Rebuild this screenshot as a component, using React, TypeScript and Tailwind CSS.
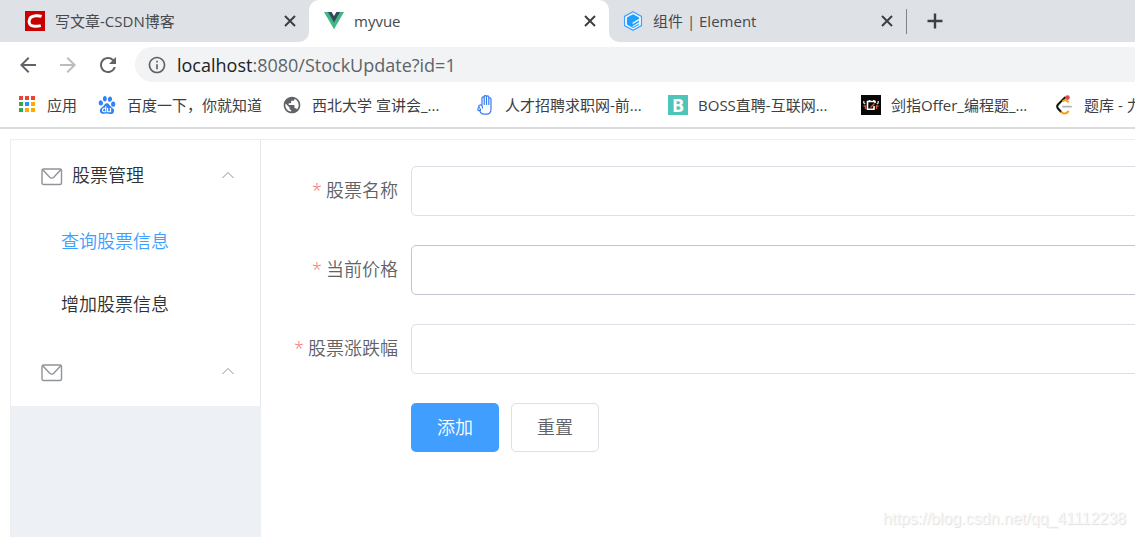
import type { ReactNode } from "react";
import { MdArrowBack, MdArrowForward, MdInfoOutline, MdPublic, MdRefresh } from "react-icons/md";
import { SiBaidu } from "react-icons/si";

function CsdnIcon() {
  return (
    <svg viewBox="0 0 20 20" className="size-5 shrink-0">
      <rect width="20" height="20" fill="#c90000" />
      <path
        d="M16.6 5.4C14.6 4.700 12.600 4.500 10.600 4.700C6.600 5 4.200 7.400 4.100 10.400C4 13.800 6.200 15.200 10 15.200C12 15.200 13.800 15.100 15.800 14.600"
        fill="none"
        stroke="#fff"
        strokeWidth="3"
      />
    </svg>
  );
}

function VueIcon() {
  return (
    <svg viewBox="0 0 20 20" className="size-5 shrink-0">
      <path d="M0 1h20L10 18.300z" fill="#41b883" />
      <path d="M4 1h12l-6 10.400z" fill="#35495e" />
      <path d="M7.600 1h4.800L10 5z" fill="#fff" />
    </svg>
  );
}

function ElementIcon() {
  return (
    <svg viewBox="0 0 20 20" className="size-5 shrink-0">
      <path d="M10 .7l8.5 4.7v9.2L10 19.3l-8.5-4.700V5.400z" fill="#e9f5ff" stroke="#409eff" strokeWidth="1.1" />
      <path d="M10 3.200l6 3.400v1.200l-6.400 3.800v1.600l6.400-3.800v1.800l-6.400 3.700v1.400l6.200-3.600v1.400L10 17.100l-6-3.600v-7z" fill="#1e9fff" />
    </svg>
  );
}

const APP_DOTS = [
  "#ea4335", "#ea4335", "#ea4335",
  "#34a853", "#2196f3", "#fbab00",
  "#34a853", "#fbab00", "#fbab00",
];

function AppsIcon() {
  return (
    <svg viewBox="0 0 20 20" className="size-5">
      {APP_DOTS.map((color, i) => (
        <rect key={i} x={2 + (i % 3) * 6} y={1 + Math.floor(i / 3) * 6} width="4" height="4" fill={color} />
      ))}
    </svg>
  );
}

function HandIcon() {
  return (
    <svg viewBox="0 0 20 20" className="size-5" fill="none" stroke="#3b7bf0" strokeWidth="1.2" strokeLinecap="round" strokeLinejoin="round">
      <path d="M7 9.500V3a1.100 1.100 0 0 1 2.200 0v6.500M9.200 9.500V1.700a1.100 1.100 0 0 1 2.300 0v7.800M11.500 9.500V2a1.100 1.100 0 0 1 2.300 0v7.500M13.800 9.500V4a1.100 1.100 0 0 1 2.200 0v10c0 3-1.600 5.200-4.600 5.200H9.200c-2 0-3.600-1.200-4.200-2.800" />
      <path d="M7.500 13c.3-2-1-3.300-2.500-3s-1.800 1.900-.6 2.400c-1.800.2-2.300 3-.4 3.300 1.600.2 2.200-1.600.8-1.900" />
    </svg>
  );
}

function BossIcon() {
  return (
    <span className="flex size-5 items-center justify-center bg-[#4fc4b9] text-lg/5 font-bold text-white">
      B
    </span>
  );
}

function NowcoderIcon() {
  return (
    <svg viewBox="0 0 20 20" className="size-5" fill="none">
      <rect width="20" height="20" fill="#080808" />
      <path d="M14 8V6.500H6.500v7.700H13V11M8.500 6V5M13 6V5" stroke="#fff" strokeWidth="1.600" />
      <path d="M2.800 6v2l1.400 1M17.200 6v2l-1.400 1" stroke="#ddd" strokeWidth="1.300" />
      <path d="M2.500 11h2v3M17.500 11h-2v3M9.500 12.500l4-4" stroke="#e0512f" strokeWidth="1.400" />
    </svg>
  );
}

function LeetcodeIcon() {
  return (
    <svg viewBox="0 0 20 20" className="size-5" fill="none" strokeWidth="2" strokeLinecap="round">
      <path d="M11 2.500L4 9.500c-1 1.200-1 2.800 0 4l3 3.200" stroke="#111" />
      <path d="M9 6c1.800-1.400 3.800-1 5.200.8M7.500 17.200c2 2 4.600 1.800 6.700-.7" stroke="#f9a01b" />
      <path d="M9 11.700h8" stroke="#b3b3b3" strokeWidth="1.800" />
      <circle cx="13.500" cy="2.600" r="2.300" fill="#e0484a" />
    </svg>
  );
}

function CloseButton({ label }: { label: string }) {
  return (
    <button type="button" aria-label={label} className="ml-auto shrink-0">
      <svg viewBox="0 0 20 20" className="size-5" stroke="#3c4043" strokeWidth="2">
        <path d="M5 5l10 10M15 5L5 15" />
      </svg>
    </button>
  );
}

function Tab({ icon, title }: { icon: ReactNode; title: string }) {
  return (
    <div className="flex h-full items-center gap-[10px] pr-[9px] text-[15px]">
      {icon}
      <span className="whitespace-nowrap">{title}</span>
      <CloseButton label={`关闭 ${title}`} />
    </div>
  );
}

function TabStrip() {
  return (
    <div className="flex h-[42px] bg-white text-[#45494d]">
      <div className="w-[309px] shrink-0 rounded-br-[10px] bg-[#dee1e6] pl-[25px]">
        <Tab icon={<CsdnIcon />} title="写文章-CSDN博客" />
      </div>
      <div className="w-[300px] shrink-0 bg-[linear-gradient(#dee1e6_50%,white_50%)]">
        <div className="h-full rounded-t-[10px] bg-white pl-[15px]">
          <Tab icon={<VueIcon />} title="myvue" />
        </div>
      </div>
      <div className="flex min-w-0 flex-1 items-center rounded-bl-[10px] bg-[#dee1e6]">
        <div className="h-full w-[297px] shrink-0 pl-[14px]">
          <Tab icon={<ElementIcon />} title="组件 | Element" />
        </div>
        <div className="h-[25px] w-px bg-[#808387]" />
        <button type="button" aria-label="新标签页" className="ml-[18px]">
          <svg viewBox="0 0 20 20" className="size-5" stroke="#3c4043" strokeWidth="2.400">
            <path d="M10 2.500v15M2.500 10h15" />
          </svg>
        </button>
      </div>
    </div>
  );
}

function Toolbar() {
  return (
    <div className="flex h-[45px] items-center pl-4 text-[#5f6368]">
      <button type="button" aria-label="后退">
        <MdArrowBack size={24} />
      </button>
      <button type="button" aria-label="前进" className="ml-4 text-[#babcbe]">
        <MdArrowForward size={24} />
      </button>
      <button type="button" aria-label="重新加载" className="ml-4">
        <MdRefresh size={24} />
      </button>
      <div className="ml-[15px] flex h-[35px] min-w-0 flex-1 items-center gap-[10px] rounded-l-full bg-[#f1f3f4] pl-3 text-lg whitespace-nowrap">
        <MdInfoOutline size={20} className="shrink-0" />
        <span>
          <span className="text-[#202124]">localhost</span>:8080/StockUpdate?id=1
        </span>
      </div>
    </div>
  );
}

const BOOKMARKS = [
  { title: "应用", icon: <AppsIcon />, width: "" },
  { title: "百度一下，你就知道", icon: <SiBaidu size={18} color="#2f83f7" />, width: "" },
  { title: "西北大学 宣讲会_...", icon: <MdPublic size={22} color="#5f6368" />, width: "w-[173px]" },
  { title: "人才招聘求职网-前...", icon: <HandIcon />, width: "w-[173px]" },
  { title: "BOSS直聘-互联网...", icon: <BossIcon />, width: "w-[173px]" },
  { title: "剑指Offer_编程题_...", icon: <NowcoderIcon />, width: "w-[173px]" },
  { title: "题库 - 力扣", icon: <LeetcodeIcon />, width: "w-[173px]" },
];

function BookmarkBar() {
  return (
    <nav className="flex h-[42px] gap-5 overflow-hidden border-b-2 border-[#dadce0] pb-1 pl-[17px] text-[15px] text-[#3c4043]">
      {BOOKMARKS.map((item) => (
        <a key={item.title} href="#" className={`flex shrink-0 items-center gap-[10px] whitespace-nowrap ${item.width}`}>
          <span className="flex w-5 shrink-0 justify-center">{item.icon}</span>
          {item.title}
        </a>
      ))}
    </nav>
  );
}

function MenuTitle({ title }: { title: string }) {
  return (
    <button
      type="button"
      aria-label={title || "菜单"}
      aria-expanded="true"
      className="flex h-[70px] w-full items-center pr-[25px] pl-[30px] text-[#303133]"
    >
      <svg viewBox="0 0 22 18" className="mt-1 h-[18px] w-[22px]" fill="none" stroke="#909399" strokeWidth="1.400">
        <rect x="1" y="1" width="19.500" height="15.500" rx="1.500" />
        <path d="M1.500 1.500L8.500 9c1.500 1.500 3 1.500 4.500 0l7-7.500" />
      </svg>
      <span className="ml-[9px]">{title}</span>
      <svg viewBox="0 0 14 8" className="ml-auto h-2 w-[14px]" fill="none" stroke="#909399">
        <path d="M1.500 7L7 1.500L12.500 7" />
      </svg>
    </button>
  );
}

function Sidebar() {
  return (
    <aside className="w-[250px] shrink-0 bg-[#edf0f5]">
      <div className="border-r border-[#e6e6e6] bg-white">
        <MenuTitle title="股票管理" />
        <a href="#" className="flex h-[63px] items-center pb-0.5 pl-[50px] text-[#409eff]">
          查询股票信息
        </a>
        <a href="#" className="flex h-[63px] items-center pb-0.5 pl-[50px] text-[#303133]">
          增加股票信息
        </a>
        <MenuTitle title="" />
      </div>
    </aside>
  );
}

const FIELDS = [
  { id: "name", label: "股票名称", border: "border-[#dcdfe6]" },
  { id: "price", label: "当前价格", border: "border-[#c0c4cc]" },
  { id: "change", label: "股票涨跌幅", border: "border-[#dcdfe6]" },
];

function StockForm() {
  return (
    <form className="flex min-w-0 flex-1 flex-col gap-[29px] pt-[26px] text-[#606266]">
      {FIELDS.map((field) => (
        <div key={field.id} className="flex h-[50px] items-center">
          <label htmlFor={field.id} className="w-[150px] shrink-0 pr-[13px] pb-0.5 text-right">
            <span className="mr-1 text-[#f56c6c]">*</span>
            {field.label}
          </label>
          <input id={field.id} required className={`h-full min-w-0 flex-1 rounded-[5px] border px-[18px] outline-none ${field.border}`} />
        </div>
      ))}
      <div className="flex gap-3 pl-[150px]">
        <button type="button" className="h-[49px] w-[88px] rounded-[5px] bg-[#409eff] pb-0.5 text-white">
          添加
        </button>
        <button type="reset" className="h-[49px] w-[88px] rounded-[5px] border border-[#dcdfe6] pb-0.5">
          重置
        </button>
      </div>
    </form>
  );
}

export default function App() {
  return (
    <div className="relative flex min-h-screen flex-col overflow-hidden bg-white font-['Open_Sans','Noto_Sans_CJK_SC',sans-serif]">
      <TabStrip />
      <Toolbar />
      <BookmarkBar />
      <main className="mt-[10px] -mr-10 ml-[10px] flex flex-1 border-t border-l border-[#eee] text-lg font-[350]">
        <Sidebar />
        <StockForm />
      </main>
      <div className="absolute right-[9px] bottom-[6px] font-['Liberation_Sans',sans-serif] text-base text-[#f8f8f8] [text-shadow:1px_1px_1px_#ddd]">
        https://blog.csdn.net/qq_41112238
      </div>
    </div>
  );
}
